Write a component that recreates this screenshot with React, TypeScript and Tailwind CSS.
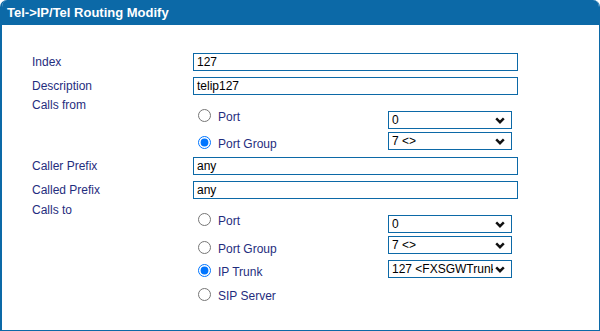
import React from 'react';

const BLUE = 'border-[#0c69a7]';

function Chevron() {
    return (
        <svg className="w-[10px] h-[7px]" viewBox="0 0 10 7">
            <polyline points="1.2,1.3 5,5.2 8.8,1.3" fill="none" stroke="#111" strokeWidth="2.4" />
        </svg>
    );
}

function TextBox({ value }: { value: string }) {
    return (
        <div className={`w-[325px] h-[18px] border ${BLUE} pl-[3px] flex items-center text-[12px] leading-[14px] text-black`}>
            {value}
        </div>
    );
}

function Select({ value, className = '' }: { value: string; className?: string }) {
    return (
        <div className={`w-[124px] h-[18px] border ${BLUE} pl-[3px] pr-[6px] flex items-center justify-between text-[12px] leading-[14px] text-black ${className}`}>
            <span className="w-[101px] overflow-hidden whitespace-nowrap">{value}</span>
            <Chevron />
        </div>
    );
}

function Radio({ label, checked = false, className = '' }: { label: string; checked?: boolean; className?: string }) {
    return (
        <label className={`h-[18px] flex items-center ${className}`}>
            <input type="radio" readOnly checked={checked} className="ml-[5px] mr-[7px] w-[13px] h-[13px] accent-[#0075ff]" />
            <span className="pt-[3px]">{label}</span>
        </label>
    );
}

function FieldRow({ label, value, className = '' }: { label: string; value: string; className?: string }) {
    return (
        <div className={`flex items-center ${className}`}>
            <div className="w-[161px]">{label}</div>
            <TextBox value={value} />
        </div>
    );
}

export default function App() {
    return (
        <div className="w-[600px] h-[331px] bg-white" style={{ fontFamily: '"Liberation Sans", Arial, sans-serif' }}>
            <div className={`h-full flex flex-col border-l-2 border-r border-b ${BLUE} rounded-tl-[7px] rounded-tr-[7px] overflow-hidden`}>
                <div className="h-[25px] bg-[#0c69a7] flex items-center pl-[5px] text-white font-bold text-[13px]">
                    Tel-&gt;IP/Tel Routing Modify
                </div>

                <div className="pl-[30px] text-[12px] leading-[14px] text-[#1f2d7e]">
                    <FieldRow label="Index" value="127" className="mt-[28px]" />
                    <FieldRow label="Description" value="telip127" className="mt-[6px]" />

                    {/* Calls from */}
                    <div className="flex mt-[2px]">
                        <div className="w-[161px] pt-[1px]">Calls from</div>
                        <div className="w-[195px] flex flex-col">
                            <Radio label="Port" className="mt-[9px]" />
                            <Radio label="Port Group" checked className="mt-[9px]" />
                        </div>
                        <div className="flex flex-col">
                            <Select value="0" className="mt-[14px]" />
                            <Select value="7 <>" className="mt-[3px]" />
                        </div>
                    </div>

                    <FieldRow label="Caller Prefix" value="any" className="mt-[6px]" />
                    <FieldRow label="Called Prefix" value="any" className="mt-[6px]" />

                    {/* Calls to */}
                    <div className="flex mt-[2px]">
                        <div className="w-[161px] pt-[2px]">Calls to</div>
                        <div className="w-[195px] flex flex-col">
                            <Radio label="Port" className="mt-[9px]" />
                            <Radio label="Port Group" className="mt-[10px]" />
                            <Radio label="IP Trunk" checked className="mt-[5px]" />
                            <Radio label="SIP Server" className="mt-[6px]" />
                        </div>
                        <div className="flex flex-col">
                            <Select value="0" className="mt-[14px]" />
                            <Select value="7 <>" className="mt-[3px]" />
                            <Select value="127 <FXSGWTrunk>" className="mt-[6px]" />
                        </div>
                    </div>
                </div>
            </div>
        </div>
    );
}
